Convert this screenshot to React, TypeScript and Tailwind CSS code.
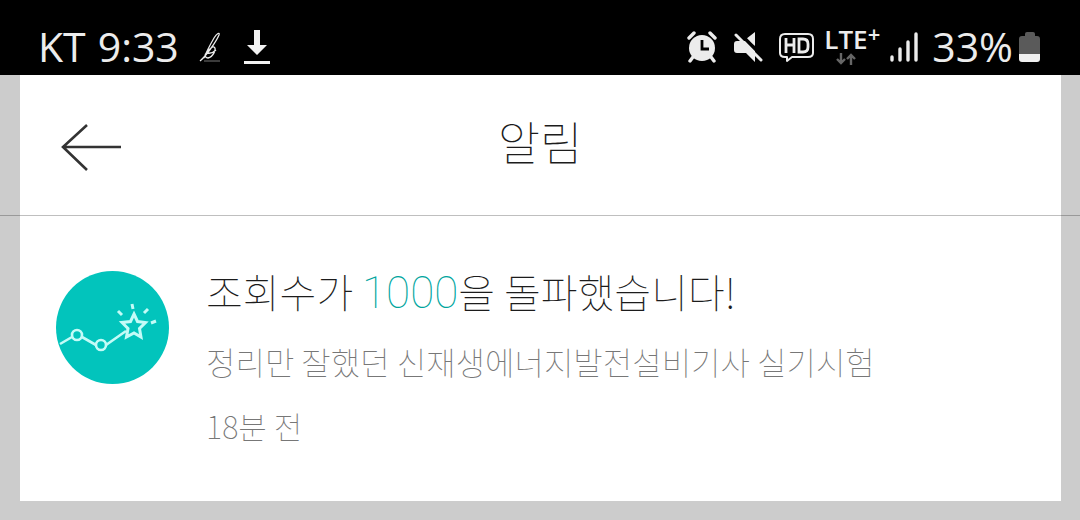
import { type ReactNode } from "react";

interface Notification {
  id: number;
  before: string;
  count: string;
  after: string;
  post: string;
  time: string;
}

const notifications: Notification[] = [
  {
    id: 1,
    before: "조회수가 ",
    count: "1000",
    after: "을 돌파했습니다!",
    post: "정리만 잘했던 신재생에너지발전설비기사 실기시험",
    time: "18분 전",
  },
];

function StatusIcon({
  label,
  className,
  viewBox,
  children,
}: {
  label: string;
  className: string;
  viewBox: string;
  children: ReactNode;
}) {
  return (
    <svg role="img" aria-label={label} viewBox={viewBox} className={`shrink-0 ${className}`} fill="none">
      {children}
    </svg>
  );
}

function StatusBar() {
  return (
    <div className="flex h-[75px] items-center justify-between bg-black pt-[18px] pr-10 pl-[38px] font-['Open_Sans','Noto_Sans',sans-serif] text-[41px] leading-[55px] text-[#ececec]">
      <div className="flex items-center">
        <span className="mr-3">KT</span>
        <span>9:33</span>
        <StatusIcon label="Blog" className="ml-5 h-8 w-6" viewBox="0 0 24 32">
          <path
            d="M1 30C7 25 17 11 20 4c1-3-2-2-5 3C11 14 7 22 5 27c3-7 8-12 10-11 3 2-1 10-6 11-3 0-4-4-1-5 4 1 7-1 9-3"
            stroke="#ececec"
            strokeWidth="1.3"
          />
          <path d="M5 30h16" stroke="#777" strokeWidth="1" />
        </StatusIcon>
        <StatusIcon label="Download" className="ml-5 h-9 w-7" viewBox="0 0 28 36">
          <path d="M11 1h6v15h7L14 26 4 16h7zM1 32h26v3H1z" fill="#f2f2f2" />
        </StatusIcon>
      </div>

      <div className="flex items-center">
        <StatusIcon label="Alarm" className="mr-4 h-8 w-[30px]" viewBox="0 0 30 32">
          <circle cx="15" cy="17" r="13" fill="#ececec" />
          <path d="M2 7l5-5M28 7l-5-5M6 26l-3 4M24 26l3 4" stroke="#ececec" strokeWidth="3.4" strokeLinecap="round" />
          <path d="M15 9v9h7" stroke="#000" strokeWidth="2.8" />
        </StatusIcon>
        <StatusIcon label="Muted" className="mr-4 h-8 w-[30px]" viewBox="0 0 30 32">
          <path d="M1 13q0-3 3-3h8l10 10v11l-9-9H4q-3 0-3-3zM22 1v14l-9-7z" fill="#ececec" />
          <path d="M5 0l25 26" stroke="#000" strokeWidth="3" />
          <path d="M3 4l25 25" stroke="#ececec" strokeWidth="3" strokeLinecap="round" />
        </StatusIcon>
        <StatusIcon label="HD voice" className="mr-2.5 h-8 w-[35px]" viewBox="0 0 35 32">
          <path
            d="M6 3h23q5 0 5 5v14q0 4-5 4H13l-5 4v-4H6q-5 0-5-4V8q0-5 5-5z"
            stroke="#ececec"
            strokeWidth="2"
            strokeLinejoin="round"
          />
          <path d="M7 7v15M15 7v15M7 14h8M20 8v13h4q5 0 5-5v-3q0-5-5-5z" stroke="#ececec" strokeWidth="2.8" />
        </StatusIcon>
        <div className="mr-2.5 flex h-11 flex-col items-center">
          <span className="flex items-start text-[26px] leading-7 font-semibold">
            LTE<span className="text-[22px] leading-4">+</span>
          </span>
          <StatusIcon label="Data activity" className="mr-3 h-3 w-5" viewBox="0 0 20 12">
            <path d="M5 0v10M1 6l4 4 4-4M15 12V2M11 6l4-4 4 4" stroke="#666" strokeWidth="2.4" />
          </StatusIcon>
        </div>
        <StatusIcon label="Signal" className="mr-3.5 h-8 w-7" viewBox="0 0 28 32">
          <path d="M2 26v3M10 18v11M18 11v18M26 3v26" stroke="#ececec" strokeWidth="3.4" strokeLinecap="round" />
        </StatusIcon>
        <span>33%</span>
        <StatusIcon label="Battery" className="ml-1.5 h-8 w-[21px]" viewBox="0 0 21 32">
          <path d="M6 3q0-2 2-2h6q2 0 2 2v2h2q3 0 3 3v15H0V8q0-3 3-3h3z" fill="#5a5a5a" />
          <path d="M0 23h21v5q0 3-3 3H3q-3 0-3-3z" fill="#f0f0f0" />
        </StatusIcon>
      </div>
    </div>
  );
}

function MilestoneIcon() {
  return (
    <svg viewBox="0 0 114 114" className="size-[114px] shrink-0" fill="none" aria-hidden="true">
      <circle cx="56.5" cy="57.5" r="56.5" fill="#02c4bc" />
      <g stroke="#c4fbf7" strokeWidth="2.6">
        <path d="M4 74l12-7M26 67l14 8M50 75l20-14" />
        <circle cx="21" cy="65" r="5" />
        <circle cx="45" cy="75" r="5" />
        <path d="M78 44l3.5 7.5 8 1-6 6 1.5 8.5-7-4-7.500 4 1.500-8.500-6-6 8.500-1z" strokeWidth="3" />
        <path d="M62 41l4 4M76 34l1 5M92 39l-4 4M100 51l-5 2" strokeWidth="3" />
      </g>
    </svg>
  );
}

export default function App() {
  return (
    <div className="min-h-screen bg-[#cccccc] font-['Noto_Sans_CJK_KR',sans-serif]">
      <StatusBar />

      <main className="mr-[19px] ml-5 bg-white text-[#1c1c1c]">
        <header className="-mr-[19px] -ml-5 grid grid-cols-[1fr_auto_1fr] items-start border-b border-black/25 px-[60px] pt-[31px] pb-[41px]">
          <button type="button" aria-label="뒤로" className="mt-4 w-16">
            <svg viewBox="0 0 64 50" className="h-[50px] w-16" fill="none">
              <path d="M27 3L3 25l24 23M3 25h58" stroke="#333" strokeWidth="2.6" />
            </svg>
          </button>
          <h1 className="text-[46px] leading-[68px] font-thin">알림</h1>
        </header>

        <ul>
          {notifications.map((item) => (
            <li key={item.id} className="flex gap-9 px-9 pt-[50px] pb-[51px]">
              <div className="pt-1">
                <MilestoneIcon />
              </div>
              <div className="min-w-0">
                <p className="text-[40px] leading-[50px] font-thin">
                  {item.before}
                  <span className="font-['Roboto',sans-serif] text-[44px] leading-[50px] font-thin text-[#00a59e]">{item.count}</span>
                  {item.after}
                </p>
                <p className="mt-[18px] text-[32px] leading-[50px] font-thin text-[#777]">{item.post}</p>
                <p className="mt-4 text-[31px] leading-[48px] font-thin text-[#777]">{item.time}</p>
              </div>
            </li>
          ))}
        </ul>
      </main>
    </div>
  );
}
